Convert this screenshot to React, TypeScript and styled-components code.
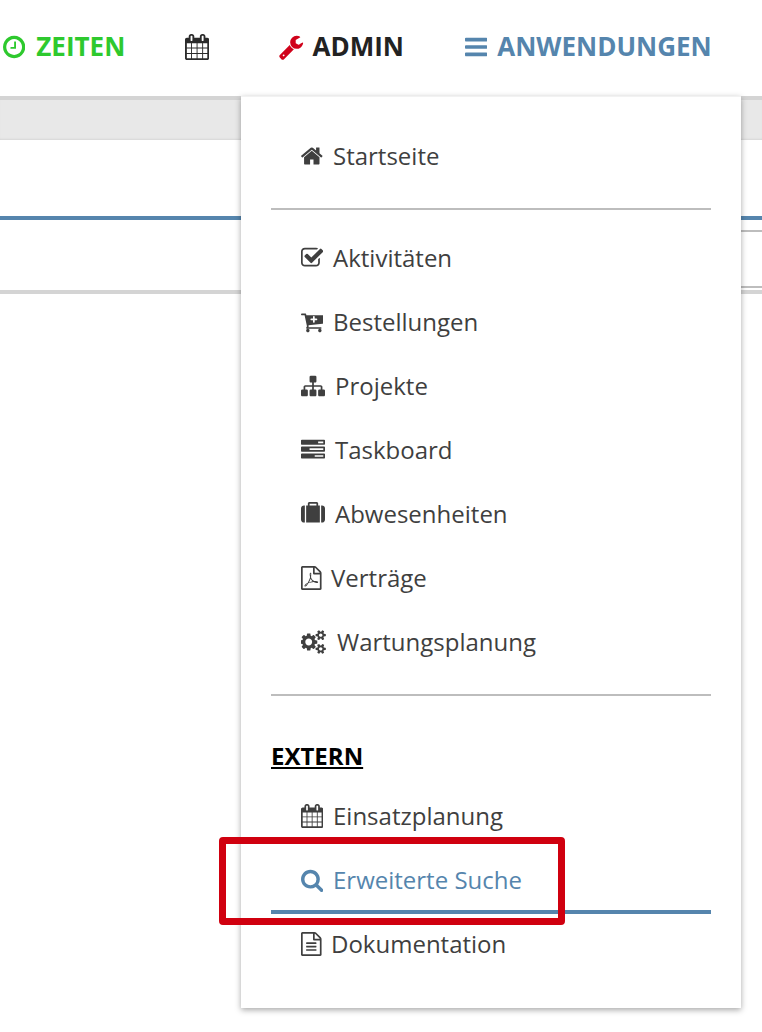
import React from "react";
import styled, { createGlobalStyle } from "styled-components";

const Global = createGlobalStyle`
  html, body { margin: 0; padding: 0; background: #fff; }
  body { font-family: "Open Sans", "Liberation Sans", sans-serif; }
`;

type Glyph = { d: string; x: number; w: number };

const file =
  "M1596 380q28 28 48 76t20 88v1152q0 40-28 68t-68 28h-1344q-40 0-68-28t-28-68v-1600q0-40 28-68t68-28h896q40 0 88 20t76 48zm-444-244v376h376q-10-29-22-41l-313-313q-12-12-41-22zm384 1528v-1024h-416q-40 0-68-28t-28-68v-416h-768v1536h1280z";
const calendar =
  "M192 1664h288v-288h-288v288zm352 0h320v-288h-320v288zm-352-352h288v-320h-288v320zm352 0h320v-320h-320v320zm-352-384h288v-288h-288v288zm736 736h320v-288h-320v288zm-384-736h320v-288h-320v288zm768 736h288v-288h-288v288zm-384-352h320v-320h-320v320zm-352-864v-288q0-13-9.500-22.500t-22.500-9.500h-64q-13 0-22.500 9.500t-9.500 22.500v288q0 13 9.500 22.500t22.500 9.500h64q13 0 22.500-9.500t9.500-22.500zm736 864h288v-320h-288v320zm-384-384h320v-288h-320v288zm384 0h288v-288h-288v288zm32-480v-288q0-13-9.500-22.500t-22.500-9.500h-64q-13 0-22.500 9.500t-9.500 22.500v288q0 13 9.500 22.500t22.500 9.500h64q13 0 22.500-9.500t9.500-22.500zm384-64v1280q0 52-38 90t-90 38h-1408q-52 0-90-38t-38-90v-1280q0-52 38-90t90-38h128v-96q0-66 47-113t113-47h64q66 0 113 47t47 113v96h384v-96q0-66 47-113t113-47h64q66 0 113 47t47 113v96h128q52 0 90 38t38 90z";

const glyphs: Record<string, Glyph> = {
  clock: {
    x: 128, w: 1536,
    d: "M1024 544v448q0 14-9 23t-23 9h-320q-14 0-23-9t-9-23v-64q0-14 9-23t23-9h224v-352q0-14 9-23t23-9h64q14 0 23 9t9 23zm416 352q0-148-73-273t-198-198-273-73-273 73-198 198-73 273 73 273 198 198 273 73 273-73 198-198 73-273zm224 0q0 209-103 385.500t-279.500 279.500-385.500 103-385.500-103-279.500-279.500-103-385.500 103-385.500 279.500-279.500 385.500-103 385.500 103 279.500 279.500 103 385.500z",
  },
  calendar: { x: 64, w: 1664, d: calendar },
  wrench: {
    x: 64, w: 1664,
    d: "M448 1472q0-26-19-45t-45-19-45 19-19 45 19 45 45 19 45-19 19-45zm644-420l-682 682q-37 37-90 37-52 0-91-37l-106-108q-38-36-38-90 0-53 38-91l681-681q39 98 114.500 173.500t173.500 114.500zm634-435q0 39-23 106-47 134-164.500 217.500t-258.500 83.500q-185 0-316.500-131.500t-131.500-316.500 131.500-316.500 316.500-131.500q58 0 121.500 16.500t107.500 46.500q16 11 16 28t-16 28l-293 169v224l193 107q5-3 79-48.500t135.500-81 70.500-35.500q15 0 23.500 10t8.500 25z",
  },
  bars: {
    x: 128, w: 1536,
    d: "M1664 1344v128q0 26-19 45t-45 19h-1408q-26 0-45-19t-19-45v-128q0-26 19-45t45-19h1408q26 0 45 19t19 45zm0-512v128q0 26-19 45t-45 19h-1408q-26 0-45-19t-19-45v-128q0-26 19-45t45-19h1408q26 0 45 19t19 45zm0-512v128q0 26-19 45t-45 19h-1408q-26 0-45-19t-19-45v-128q0-26 19-45t45-19h1408q26 0 45 19t19 45z",
  },
  home: {
    x: 90, w: 1612,
    d: "M1472 992v480q0 26-19 45t-45 19h-384v-384h-256v384h-384q-26 0-45-19t-19-45v-480q0-1 .5-3t.5-3l575-474 575 474q1 2 1 6zm223-69l-62 74q-8 9-21 11h-3q-13 0-21-7l-692-577-692 577q-12 8-24 7-13-2-21-11l-62-74q-8-10-7-23.500t11-21.500l719-599q32-26 76-26t76 26l244 204v-195q0-14 9-23t23-9h192q14 0 23 9t9 23v408l219 182q10 8 11 21.500t-7 23.500z",
  },
  check: {
    x: 64, w: 1664,
    d: "M1472 930v318q0 119-84.500 203.500t-203.500 84.500h-832q-119 0-203.500-84.500t-84.500-203.500v-832q0-119 84.500-203.500t203.500-84.500h832q63 0 117 25 15 7 18 23 3 17-9 29l-49 49q-10 10-23 10-3 0-9-2-23-6-45-6h-832q-66 0-113 47t-47 113v832q0 66 47 113t113 47h832q66 0 113-47t47-113v-254q0-13 9-22l64-64q10-10 23-10 6 0 12 3 20 8 20 29zm231-489l-814 814q-24 24-57 24t-57-24l-430-430q-24-24-24-57t24-57l110-110q24-24 57-24t57 24l263 263 647-647q24-24 57-24t57 24l110 110q24 24 24 57t-24 57z",
  },
  cart: {
    x: 0, w: 1664,
    d: "M1216 704q0-26-19-45t-45-19h-128v-128q0-26-19-45t-45-19-45 19-19 45v128h-128q-26 0-45 19t-19 45 19 45 45 19h128v128q0 26 19 45t45 19 45-19 19-45v-128h128q26 0 45-19t19-45zm-576 832q0 53-37.500 90.500t-90.500 37.500-90.500-37.500-37.500-90.500 37.500-90.500 90.500-37.500 90.500 37.500 37.500 90.500zm896 0q0 53-37.500 90.500t-90.500 37.500-90.500-37.500-37.500-90.500 37.500-90.500 90.500-37.500 90.500 37.500 37.500 90.500zm128-1088v512q0 24-16 42.500t-41 21.500l-1044 122q1 7 4.500 21.500t6 26.500 2.500 22q0 16-24 64h920q26 0 45 19t19 45-19 45-45 19h-1024q-26 0-45-19t-19-45q0-14 11-39.500t29.500-59.500 20.500-38l-177-823h-204q-26 0-45-19t-19-45 19-45 45-19h256q16 0 28.500 6.500t20 15.500 13 24.500 7.500 26.500 5.500 29.500 4.500 25.500h1201q26 0 45 19t19 45z",
  },
  sitemap: {
    x: 0, w: 1792,
    d: "M1792 1248v320q0 40-28 68t-68 28h-320q-40 0-68-28t-28-68v-320q0-40 28-68t68-28h96v-192h-512v192h96q40 0 68 28t28 68v320q0 40-28 68t-68 28h-320q-40 0-68-28t-28-68v-320q0-40 28-68t68-28h96v-192h-512v192h96q40 0 68 28t28 68v320q0 40-28 68t-68 28h-320q-40 0-68-28t-28-68v-320q0-40 28-68t68-28h96v-192q0-52 38-90t90-38h512v-192h-96q-40 0-68-28t-28-68v-320q0-40 28-68t68-28h320q40 0 68 28t28 68v320q0 40-28 68t-68 28h-96v192h512q52 0 90 38t38 90v192h96q40 0 68 28t28 68z",
  },
  tasks: {
    x: 0, w: 1792,
    d: "M1024 1408h640v-128h-640v128zm-384-512h1024v-128h-1024v128zm640-512h384v-128h-384v128zm512 832v256q0 26-19 45t-45 19h-1664q-26 0-45-19t-19-45v-256q0-26 19-45t45-19h1664q26 0 45 19t19 45zm0-512v256q0 26-19 45t-45 19h-1664q-26 0-45-19t-19-45v-256q0-26 19-45t45-19h1664q26 0 45 19t19 45zm0-512v256q0 26-19 45t-45 19h-1664q-26 0-45-19t-19-45v-256q0-26 19-45t45-19h1664q26 0 45 19t19 45z",
  },
  suitcase: {
    x: 0, w: 1792,
    d: "M640 256h512v-128h-512v128zm-352 0v1280h-64q-92 0-158-66t-66-158v-832q0-92 66-158t158-66h64zm1120 0v1280h-1024v-1280h128v-160q0-40 28-68t68-28h576q40 0 68 28t28 68v160h128zm384 224v832q0 92-66 158t-158 66h-64v-1280h64q92 0 158 66t66 158z",
  },
  pdf: {
    x: 128, w: 1536,
    d: file + "m-514-593q33 26 84 56 59-7 117-7 147 0 177 49 16 22 2 52 0 1-1 2l-2 2v1q-6 38-71 38-48 0-115-20t-130-53q-221 24-392 83-153 262-242 262-15 0-28-7l-24-12q-1-1-6-5-10-10-6-36 9-40 56-91.500t132-96.500q14-9 23 6 2 2 2 4 52-85 107-197 68-136 104-262-24-82-30.500-159.500t6.500-127.500q11-40 42-40h22q23 0 35 15 18 21 9 68-2 6-4 8 1 3 1 8v30q-2 123-14 192 55 164 146 238zm-576 411q52-24 137-158-51 40-87.500 84t-49.500 74zm398-920q-15 42-2 132 1-7 7-44 0-3 7-43 1-4 4-8-1-1-1-2-1-2-1-3-1-22-13-36 0 1-1 2v2zm-124 661q135-54 284-81-2-1-13-9.500t-16-13.500q-76-67-127-176-27 86-83 197-30 56-45 83zm646-16q-24-24-140-24 76 28 124 28 14 0 18-1 0-1-2-3z",
  },
  cogs: {
    x: 0, w: 1920,
    d: "M832 896q0-106-75-181t-181-75-181 75-75 181 75 181 181 75 181-75 75-181zm768 512q0-52-38-90t-90-38-90 38-38 90q0 53 37.500 90.500t90.500 37.500 90.500-37.500 37.500-90.500zm0-1024q0-52-38-90t-90-38-90 38-38 90q0 53 37.500 90.500t90.500 37.500 90.500-37.500 37.500-90.500zm-384 421v185q0 10-7 19.500t-16 10.500l-155 24q-11 35-32 76 34 48 90 115 7 11 7 20 0 12-7 19-23 30-82.500 89.500t-78.500 59.500q-11 0-21-7l-115-90q-37 19-77 31-11 108-23 155-7 24-30 24h-186q-11 0-20-7.500t-10-17.500l-23-153q-34-10-75-31l-118 89q-7 7-20 7-11 0-21-8-144-133-144-160 0-9 7-19 10-14 41-53t47-61q-23-44-35-82l-152-24q-10-1-17-9.500t-7-19.500v-185q0-10 7-19.500t16-10.500l155-24q11-35 32-76-34-48-90-115-7-11-7-20 0-12 7-20 22-30 82-89t79-59q11 0 21 7l115 90q34-18 77-32 11-108 23-154 7-24 30-24h186q11 0 20 7.500t10 17.500l23 153q34 10 75 31l118-89q8-7 20-7 11 0 21 8 144 133 144 160 0 8-7 19-12 16-42 54t-45 60q23 48 34 82l152 23q10 2 17 10.500t7 19.500zm640 533v140q0 16-149 31-12 27-30 52 51 113 51 138 0 4-4 7-122 71-124 71-8 0-46-47t-52-68q-20 2-30 2t-30-2q-14 21-52 68t-46 47q-2 0-124-71-4-3-4-7 0-25 51-138-18-25-30-52-149-15-149-31v-140q0-16 149-31 13-29 30-52-51-113-51-138 0-4 4-7 4-2 35-20t59-34 30-16q8 0 46 46.500t52 67.500q20-2 30-2t30 2q51-71 92-112l6-2q4 0 124 70 4 3 4 7 0 25-51 138 17 23 30 52 149 15 149 31zm0-1024v140q0 16-149 31-12 27-30 52 51 113 51 138 0 4-4 7-122 71-124 71-8 0-46-47t-52-68q-20 2-30 2t-30-2q-14 21-52 68t-46 47q-2 0-124-71-4-3-4-7 0-25 51-138-18-25-30-52-149-15-149-31v-140q0-16 149-31 13-29 30-52-51-113-51-138 0-4 4-7 4-2 35-20t59-34 30-16q8 0 46 46.500t52 67.500q20-2 30-2t30 2q51-71 92-112l6-2q4 0 124 70 4 3 4 7 0 25-51 138 17 23 30 52 149 15 149 31z",
  },
  search: {
    x: 64, w: 1664,
    d: "M1216 832q0-185-131.500-316.500t-316.500-131.500-316.500 131.500-131.500 316.500 131.500 316.500 316.500 131.500 316.500-131.500 131.500-316.500zm512 832q0 52-38 90t-90 38q-54 0-90-38l-343-342q-179 124-399 124-143 0-273.500-55.500t-225-150-150-225-55.500-273.500 55.500-273.500 150-225 225-150 273.500-55.500 273.500 55.500 225 150 150 225 55.500 273.500q0 220-124 399l343 343q37 37 37 90z",
  },
  doc: {
    x: 128, w: 1536,
    d: file + "m-1024-864q0-14 9-23t23-9h704q14 0 23 9t9 23v64q0 14-9 23t-23 9h-704q-14 0-23-9t-9-23v-64zm736 224q14 0 23 9t9 23v64q0 14-9 23t-23 9h-704q-14 0-23-9t-9-23v-64q0-14 9-23t23-9h704zm0 256q14 0 23 9t9 23v64q0 14-9 23t-23 9h-704q-14 0-23-9t-9-23v-64q0-14 9-23t23-9h704z",
  },
};

const Svg = styled.svg<{ $tint?: string }>`
  display: block;
  flex: none;
  fill: ${(p) => p.$tint ?? "currentColor"};
`;

function Icon({ name, size, tint }: { name: string; size: number; tint?: string }) {
  const g = glyphs[name];
  return (
    <Svg
      $tint={tint}
      viewBox={`${g.x} 0 ${g.w} 1792`}
      width={(g.w * size) / 1792}
      height={size}
      aria-hidden="true"
    >
      <path d={g.d} />
    </Svg>
  );
}

const Page = styled.div`
  width: 762px;
  height: 1032px;
  position: relative;
  overflow: hidden;
  background: #fff;
`;

const TopBar = styled.header`
  height: 96px;
  box-sizing: border-box;
  display: flex;
  align-items: center;
  padding: 0 0 2px 3px;
`;

const NavItem = styled.div<{ $color: string; $gap: number; $iconGap: number }>`
  display: flex;
  align-items: center;
  gap: ${(p) => p.$iconGap}px;
  margin-left: ${(p) => p.$gap}px;
  color: ${(p) => p.$color};
  font-size: 26px;
  font-weight: 700;
  line-height: 34px;
  white-space: nowrap;
`;

const NavLabel = styled.span`
  margin-top: -2px;
`;

const GreyBand = styled.div`
  height: 40px;
  background: #e8e8e8;
  border-top: 4px solid #d4d4d4;
  box-shadow: inset 0 -2px 2px -1px rgba(0, 0, 0, 0.08);
`;

const Row = styled.div`
  height: 76px;
  border-bottom: 4px solid #5585ad;
`;

const SubRow = styled.div`
  height: 70px;
  display: flex;
  justify-content: flex-end;
  border-bottom: 4px solid #d4d4d4;
`;

const SideCell = styled.div`
  width: 21px;
  height: 58px;
  margin-top: 10px;
  box-sizing: border-box;
  border-top: 2px solid #bdbdbd;
  border-bottom: 2px solid #bdbdbd;
`;

const Menu = styled.nav`
  position: absolute;
  left: 241px;
  top: 96px;
  width: 500px;
  height: 912px;
  box-sizing: border-box;
  padding: 27px 30px 0;
  background: #fff;
  border-top: 1px solid #f2f2f2;
  box-shadow: 0 2px 6px rgba(0, 0, 0, 0.35);
`;

const Item = styled.a<{ $active?: boolean }>`
  display: flex;
  align-items: center;
  height: 64px;
  box-sizing: border-box;
  padding-left: 30px;
  color: ${(p) => (p.$active ? "#5585ad" : "#3f3f3f")};
  font-size: 24px;
  line-height: 32px;
  white-space: nowrap;
`;

const ActiveItem = styled(Item)`
  position: relative;
  &::after {
    content: "";
    position: absolute;
    left: 0;
    right: 0;
    bottom: -2px;
    height: 4px;
    background: #5585ad;
  }
`;

const IconBox = styled.span<{ $w: number }>`
  display: flex;
  align-items: center;
  flex: none;
  width: ${(p) => p.$w}px;
`;

const Rule = styled.hr<{ $top: number; $bottom: number }>`
  border: 0;
  height: 2px;
  background: #bdbdbd;
  margin: ${(p) => p.$top}px 0 ${(p) => p.$bottom}px;
`;

const Heading = styled.div`
  color: #000;
  font-size: 24px;
  font-weight: 700;
  line-height: 32px;
  text-decoration: underline;
  margin-bottom: 12px;
`;

const Marker = styled.div`
  position: absolute;
  left: 219px;
  top: 837px;
  width: 346px;
  height: 88px;
  box-sizing: border-box;
  border: 7px solid #d0000f;
  border-radius: 4px;
`;

const links = [
  { t: "Aktivitäten", i: "check", w: 32 },
  { t: "Bestellungen", i: "cart", w: 32 },
  { t: "Projekte", i: "sitemap", w: 34 },
  { t: "Taskboard", i: "tasks", w: 34 },
  { t: "Abwesenheiten", i: "suitcase", w: 34 },
  { t: "Verträge", i: "pdf", w: 30 },
  { t: "Wartungsplanung", i: "cogs", w: 36 },
];

export default function App() {
  return (
    <Page>
      <Global />
      <TopBar>
        <NavItem $color="#2ec92e" $gap={0} $iconGap={11}><Icon name="clock" size={26} /><NavLabel>ZEITEN</NavLabel></NavItem>
        <NavItem $color="#2b2b2b" $gap={60} $iconGap={0}><Icon name="calendar" size={26} /></NavItem>
        <NavItem $color="#222" $gap={70} $iconGap={9}><Icon name="wrench" size={26} tint="#d0021b" /><NavLabel>ADMIN</NavLabel></NavItem>
        <NavItem $color="#5585ad" $gap={61} $iconGap={10}><Icon name="bars" size={26} /><NavLabel>ANWENDUNGEN</NavLabel></NavItem>
      </TopBar>
      <GreyBand />
      <Row />
      <SubRow><SideCell /></SubRow>
      <Menu>
        <Item><IconBox $w={32}><Icon name="home" size={24} /></IconBox>Startseite</Item>
        <Rule $top={20} $bottom={16} />
        {links.map((l) => (
          <Item key={l.t}><IconBox $w={l.w}><Icon name={l.i} size={24} /></IconBox>{l.t}</Item>
        ))}
        <Rule $top={20} $bottom={44} />
        <Heading>EXTERN</Heading>
        <Item><IconBox $w={32}><Icon name="calendar" size={24} /></IconBox>Einsatzplanung</Item>
        <ActiveItem $active><IconBox $w={32}><Icon name="search" size={24} /></IconBox>Erweiterte Suche</ActiveItem>
        <Item><IconBox $w={30}><Icon name="doc" size={24} /></IconBox>Dokumentation</Item>
      </Menu>
      <Marker />
    </Page>
  );
}
